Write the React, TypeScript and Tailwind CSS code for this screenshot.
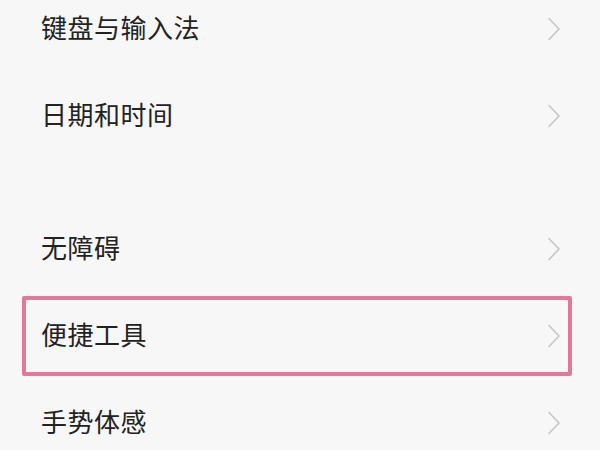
import React from "react";

type Item = { label: string; highlight?: boolean };

const groups: Item[][] = [
  [{ label: "键盘与输入法" }, { label: "日期和时间" }],
  [{ label: "无障碍" }, { label: "便捷工具", highlight: true }, { label: "手势体感" }],
];

function Chevron() {
  return (
    <svg width="14" height="24" viewBox="0 0 14 24" fill="none" className="shrink-0">
      <path d="M2 1.5 L12 12 L2 22.5" stroke="#c6c6c6" strokeWidth="1.6" strokeLinecap="round" strokeLinejoin="round" />
    </svg>
  );
}

function Row({ item }: { item: Item }) {
  return (
    <div className="relative h-[87px] flex items-center justify-between pl-[41px] pr-[39px]">
      <span className="text-[26px] leading-none text-[#222222] tracking-[0.5px] pb-[4px]">
        {item.label}
      </span>
      <Chevron />
      {item.highlight && (
        <div className="absolute left-[22px] right-[28px] top-[4px] bottom-[3px] border-[4px] border-[#e2789e] rounded-[2px] pointer-events-none" />
      )}
    </div>
  );
}

export default function App() {
  return (
    <div
      className="w-[600px] h-[450px] overflow-hidden bg-[#f7f7f7]"
      style={{ fontFamily: '"Noto Sans CJK SC", "Noto Sans", sans-serif' }}
    >
      <div className="-mt-[15px] flex flex-col gap-[46px]">
        {groups.map((g, i) => (
          <div key={i} className="flex flex-col">
            {g.map((item) => (
              <Row key={item.label} item={item} />
            ))}
          </div>
        ))}
      </div>
    </div>
  );
}
